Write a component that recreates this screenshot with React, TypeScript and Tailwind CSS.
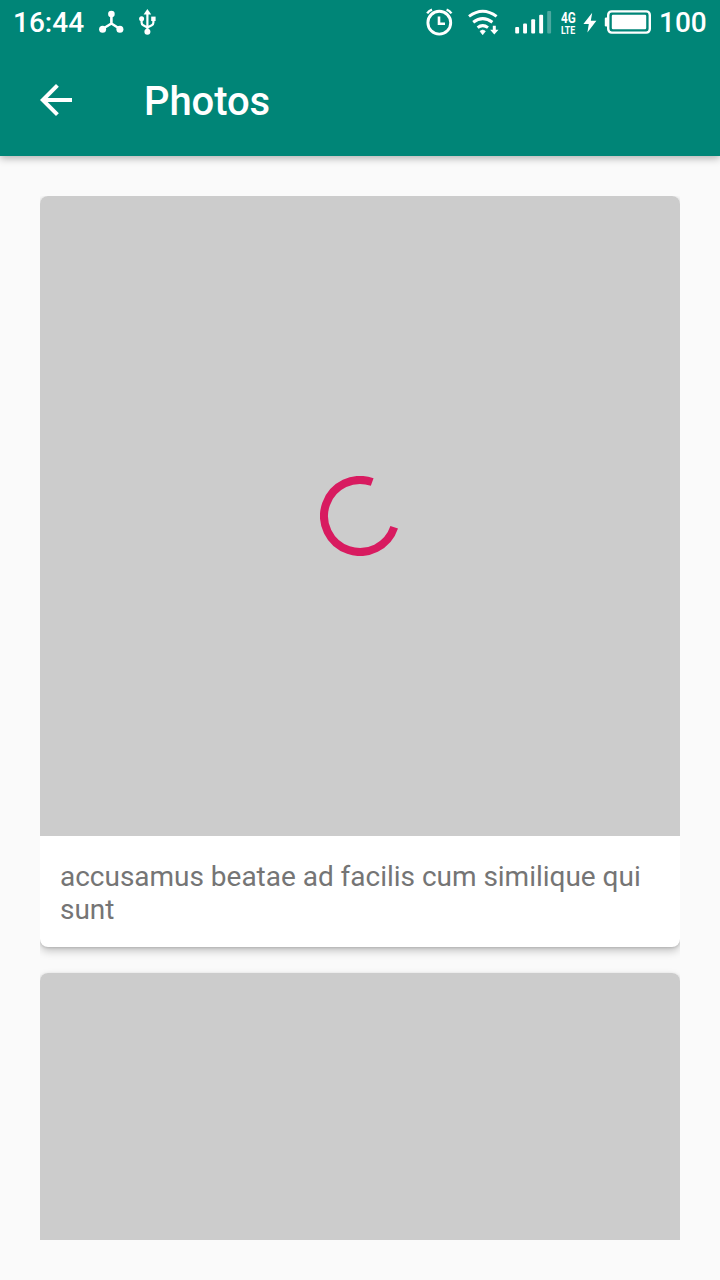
import React from "react";

function StatusIconsLeft() {
  return (
    <svg width="60" height="44" viewBox="98 0 60 44" fill="none" stroke="#fff">
      <path d="M111.4 14v9.8M111.4 23.5L102.5 29M111.4 23.5L120 29" strokeWidth="2.6" />
      <g fill="#fff" stroke="none">
        <circle cx="111.4" cy="14" r="3.3" />
        <circle cx="102.6" cy="29.3" r="3.5" />
        <circle cx="119.9" cy="29.3" r="3.5" />
        <path d="M147.4 9l3.8 5.4h-7.6z" />
        <circle cx="147.4" cy="31.8" r="3" />
        <circle cx="141.6" cy="18.8" r="2.5" />
        <rect x="151.2" y="16.6" width="4.4" height="4.4" />
      </g>
      <path
        d="M147.4 13v18M141.6 19v3.6q0 2 1.6 2.7l4.2 2.1M153.4 19v3.6q0 2-1.6 2.7l-4.4 2.1"
        strokeWidth="2.2"
      />
    </svg>
  );
}

function StatusIconsMiddle() {
  return (
    <svg width="128" height="44" viewBox="424 0 128 44" fill="none" stroke="#fff">
      <circle cx="439.3" cy="22.7" r="11.4" strokeWidth="2.9" />
      <path d="M439 16.5v7.2h6" strokeWidth="2.6" />
      <path d="M427.2 13.4q1.6-2.7 4.8-3.8M451.4 13.4q-1.6-2.7-4.8-3.8" strokeWidth="2.4" />
      <path d="M469 16.4q13.7-10.4 27.6 0" strokeWidth="3" />
      <path d="M473.2 22.2q9.5-7.2 19.2 0" strokeWidth="3" />
      <path d="M477.6 27.6q5.1-4 10.4 0" strokeWidth="3" />
      <path d="M480 31.2q2.7-2.4 5.4 0l-2.7 3.6z" fill="#fff" stroke="#fff" strokeWidth=".6" strokeLinejoin="round" />
      <path d="M492.8 25.7h3v4h2.7l-4.2 4.7-4.2-4.7h2.7z" fill="#fff" stroke="none" />
      <g fill="#fff" stroke="none">
        <rect x="515.2" y="27" width="3.9" height="6.5" rx="1" />
        <rect x="523.1" y="23.6" width="3.9" height="9.9" rx="1" />
        <rect x="531.2" y="19.3" width="3.9" height="14.2" rx="1" />
        <rect x="539.2" y="14.8" width="3.9" height="18.7" rx="1" />
        <rect x="547.2" y="11" width="3.9" height="22.5" rx="1" opacity=".3" />
      </g>
    </svg>
  );
}

function BatteryIcons() {
  return (
    <svg width="70" height="44" viewBox="582 0 70 44" fill="#fff">
      <path d="M592.2 12.8L583.4 24h5.4l-1.4 8.4L596.4 20.8h-5.6z" />
      <rect x="608.2" y="11.4" width="41.6" height="21.2" rx="3.5" fill="none" stroke="#fff" strokeWidth="2.4" />
      <rect x="611.8" y="14.8" width="34.4" height="14.4" rx="1.2" />
      <path d="M607 17.5h-1q-1.2 0-1.2 1.2v6.6q0 1.2 1.2 1.2h1z" />
    </svg>
  );
}

function StatusBar() {
  return (
    <div className="flex h-11 items-center pl-[13px] text-[28px] leading-[44px] font-medium">
      <span className="w-[85px] shrink-0 pt-[2px]">16:44</span>
      <StatusIconsLeft />
      <div className="ml-auto flex items-center">
        <StatusIconsMiddle />
        <div className="ml-[9px] flex w-[21px] flex-col pt-[4px] font-bold">
          <span className="origin-left scale-x-[0.84] text-[14px] leading-[12px]">4G</span>
          <span className="origin-left scale-x-[0.8] text-[11px] leading-[13px]">LTE</span>
        </div>
        <BatteryIcons />
        <span className="ml-[7px] w-[61px] pt-[2px]">100</span>
      </div>
    </div>
  );
}

function Spinner() {
  return (
    <svg width="80" height="80" viewBox="-40 -40 80 80" fill="none">
      <path d="M12.2 -33.9A36 36 0 1 0 34.2 11.3" stroke="#d81b60" strokeWidth="8" />
    </svg>
  );
}

function PhotoCard({ title, loading }: { title?: string; loading?: boolean }) {
  return (
    <article className="shrink-0 overflow-hidden rounded-lg bg-white shadow-[0_4px_8px_rgba(0,0,0,0.22),0_1px_3px_rgba(0,0,0,0.14)]">
      <div className="flex h-[640px] items-center justify-center bg-[#ccc]">{loading && <Spinner />}</div>
      {title && (
        <p className="h-[111px] px-5 pt-[24px] text-[28px] leading-[33px] tracking-[-0.02px] text-[#757575]">{title}</p>
      )}
    </article>
  );
}

export default function App() {
  return (
    <div className="flex h-[1280px] w-[720px] flex-col overflow-hidden bg-[#fafafa] font-['Roboto',sans-serif]">
      <header className="relative h-[156px] shrink-0 bg-[#008577] text-white shadow-[0_2px_8px_rgba(0,0,0,0.32)]">
        <StatusBar />
        <div className="flex h-28 items-center pl-10">
          <svg width="32" height="32" viewBox="4 4 16 16" fill="#fff">
            <path d="M20 11H7.83l5.59-5.59L12 4l-8 8 8 8 1.41-1.41L7.83 13H20v-2z" />
          </svg>
          <h1 className="ml-[72px] pt-[4px] text-[40px] leading-[48px] font-medium tracking-[-0.1px]">Photos</h1>
        </div>
      </header>
      <main className="mx-10 mt-10 flex h-[1044px] flex-col gap-[26px] overflow-hidden">
        <PhotoCard title="accusamus beatae ad facilis cum similique qui sunt" loading />
        <PhotoCard />
      </main>
    </div>
  );
}
